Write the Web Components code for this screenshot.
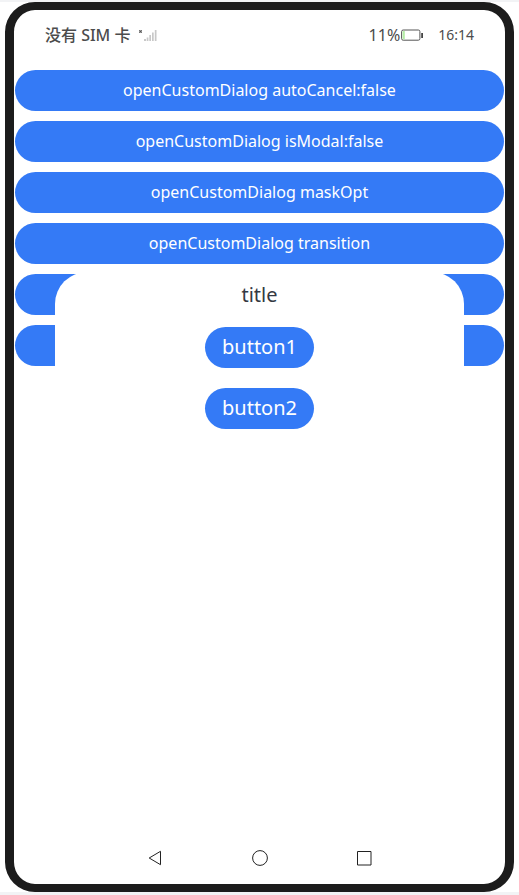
<!DOCTYPE html>
<html lang="en">
<head>
<meta charset="utf-8">
<meta name="viewport" content="width=device-width, initial-scale=1">
<title>openCustomDialog</title>
<style>
  html, body { margin: 0; height: 100%; }
  body {
    box-sizing: border-box;
    display: flex;
    flex-direction: column;
    padding: 2px 0 3px;
    background: #f2f3f5;
    font-family: "Noto Sans", "Noto Sans CJK SC", sans-serif;
    --accent: #347af6;
  }
</style>
</head>
<body>
<phone-frame>
  <status-bar slot="status" carrier="没有 SIM 卡" battery="11" time="16:14"></status-bar>
  <pill-button>openCustomDialog autoCancel:false</pill-button>
  <pill-button>openCustomDialog isModal:false</pill-button>
  <pill-button>openCustomDialog maskOpt</pill-button>
  <pill-button>openCustomDialog transition</pill-button>
  <pill-button label="Option 5"></pill-button>
  <pill-button label="Option 6"></pill-button>
  <custom-dialog slot="overlay" heading="title">
    <pill-button size="large">button1</pill-button>
    <pill-button size="large">button2</pill-button>
  </custom-dialog>
  <nav-bar slot="nav"></nav-bar>
</phone-frame>
<script>
  function define(name, markup, setup) {
    const template = document.createElement('template');
    template.innerHTML = markup;
    customElements.define(name, class extends HTMLElement {
      constructor() {
        super();
        this.attachShadow({ mode: 'open' }).append(template.content.cloneNode(true));
      }
      connectedCallback() {
        if (setup) setup(this, this.shadowRoot);
      }
    });
  }

  define('phone-frame', `
    <style>
      :host { display: flex; flex: 1; padding: 0 5px; background: #fff; }
      .screen {
        position: relative;
        flex: 1;
        display: flex;
        flex-direction: column;
        border: solid #1c1c1c;
        border-width: 8px 9px;
        border-radius: 30px;
        background: #fff;
      }
      main { flex: 1; display: flex; flex-direction: column; gap: 10px; padding: 10px 1px; }
    </style>
    <div class="screen">
      <slot name="status"></slot>
      <main><slot></slot></main>
      <slot name="nav"></slot>
      <slot name="overlay"></slot>
    </div>`);

  define('status-bar', `
    <style>
      :host {
        display: flex; align-items: center; justify-content: space-between;
        height: 50px; padding: 0 31px; color: #4c4c4c; font-size: 16px; line-height: 24px;
      }
      div { display: flex; align-items: center; }
      svg { display: block; }
      .left { gap: 8px; font-weight: 500; }
      .power { gap: 1px; }
      .right { gap: 15px; }
      time { font-size: 14px; }
    </style>
    <div class="left">
      <span class="carrier"></span>
      <svg width="19" height="12" viewBox="0 0 19 12" role="img" aria-label="No signal">
        <path d="M1 1h3v3H1z" fill="#9a9a9a"/>
        <path d="M1.500 1.500l2 2M3.500 1.500l-2 2" stroke="#555"/>
        <path d="M6 10h2v2H6zM8.700 8.500h1.700V12H8.700zM11.300 6h1.700v6h-1.700zM14 3.500h1.700V12H14zM16.800 1h1.700v11h-1.700z" fill="#c8c8c8"/>
      </svg>
    </div>
    <div class="right">
      <div class="power">
        <span class="battery"></span>
        <svg width="22" height="12" viewBox="0 0 22 12" role="img" aria-label="Battery">
          <rect x=".6" y="1" width="18.300" height="10.200" rx="1.600" fill="#fff" stroke="#555"/>
          <path d="M1.600 2h2.200v8.200H1.600z" fill="#b5eda6"/>
          <path d="M20.200 4h1.800v5h-1.800z" fill="#444"/>
        </svg>
      </div>
      <time></time>
    </div>`, (host, root) => {
      root.querySelector('.carrier').textContent = host.getAttribute('carrier');
      root.querySelector('.battery').textContent = host.getAttribute('battery') + '%';
      root.querySelector('time').textContent = host.getAttribute('time');
    });

  define('pill-button', `
    <style>
      :host { display: block; }
      button {
        display: block; width: 100%; height: 41px; margin: 0; padding: 0 17px 2px;
        border: 0; border-radius: 21px; background: var(--accent); color: #fff;
        font: 400 16px/24px "Noto Sans", sans-serif; cursor: pointer;
      }
      :host([size=large]) button { font-size: 20px; }
    </style>
    <button type="button"><slot></slot></button>`, (host, root) => {
      if (host.hasAttribute('label'))
        root.querySelector('button').setAttribute('aria-label', host.getAttribute('label'));
    });

  define('custom-dialog', `
    <style>
      :host { position: absolute; top: 262px; left: 41px; right: 41px; }
      section {
        display: flex; flex-direction: column; align-items: center; gap: 20px;
        padding: 10px; border-radius: 32px; background: #fff;
      }
      h1 { margin: 0; font-size: 20px; line-height: 25px; font-weight: 400; color: #343943; }
    </style>
    <section role="dialog" aria-labelledby="heading">
      <h1 id="heading"></h1>
      <slot></slot>
    </section>`, (host, root) => {
      root.querySelector('h1').textContent = host.getAttribute('heading');
    });

  define('nav-bar', `
    <style>
      :host { display: block; padding: 0 18% 11px; }
      nav { display: grid; grid-template-columns: repeat(3, 1fr); justify-items: center; }
      button { display: block; padding: 6px; border: 0; background: none; cursor: pointer; }
      svg { display: block; fill: none; stroke: #222; }
    </style>
    <nav>
      <button type="button" aria-label="Back"><svg width="18" height="18" viewBox="0 0 18 18"><path d="M14.500 2.300v13.400L3.200 9z"/></svg></button>
      <button type="button" aria-label="Home"><svg width="18" height="18" viewBox="0 0 18 18"><circle cx="9" cy="9" r="7.400"/></svg></button>
      <button type="button" aria-label="Recent"><svg width="18" height="18" viewBox="0 0 18 18"><path d="M2.500 2.500h13.500v13.500h-13.500z"/></svg></button>
    </nav>`);
</script>
</body>
</html>
